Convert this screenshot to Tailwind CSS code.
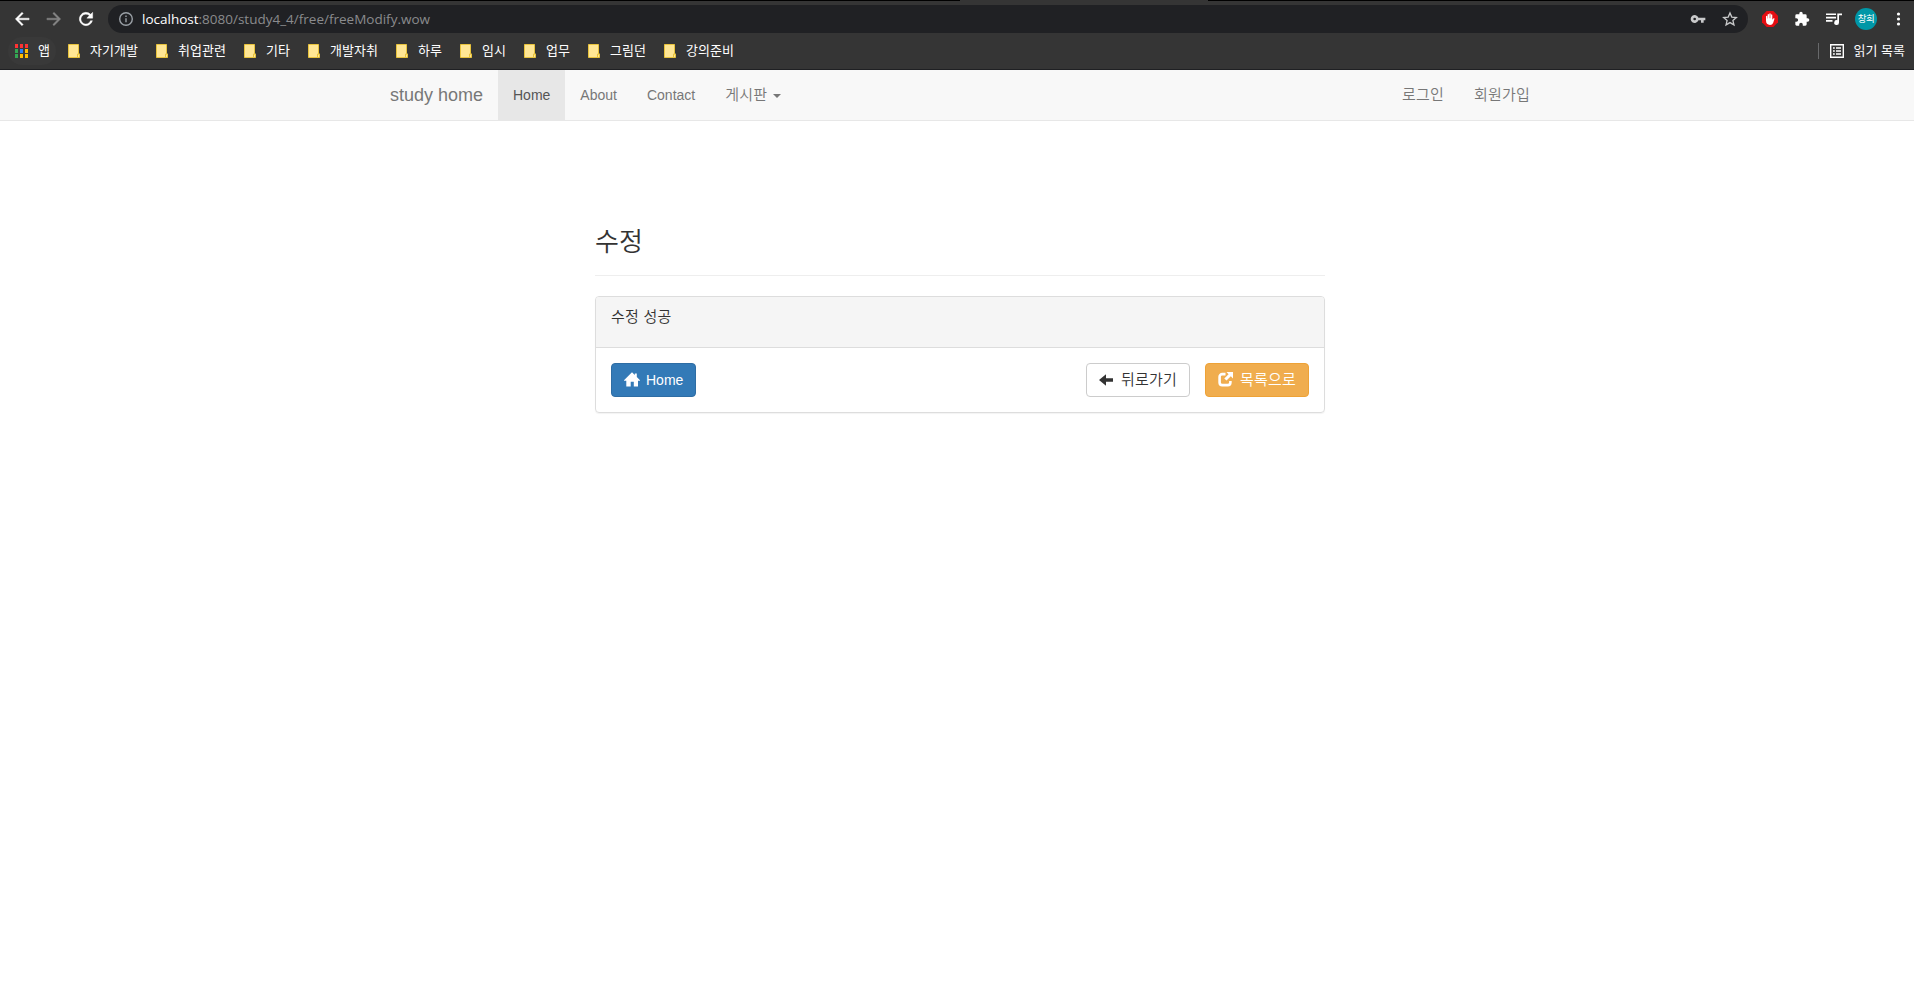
<!DOCTYPE html>
<html lang="ko">
<head>
  <meta charset="UTF-8" />
  <meta name="viewport" content="width=device-width, initial-scale=1.0" />
  <title>수정</title>
  <script src="https://cdn.jsdelivr.net/npm/@tailwindcss/browser@4"></script>
</head>
<body class="h-screen overflow-hidden bg-white font-['Liberation_Sans','Noto_Sans_CJK_KR',sans-serif] text-sm text-[#333]">

  <!-- browser toolbar -->
  <header class="h-[70px] bg-[#353535] border-b border-[#1f2023]">
    <div class="flex h-px">
      <div class="w-[960px] bg-black"></div>
      <div class="w-[248px]"></div>
      <div class="grow bg-black"></div>
    </div>
    <div class="flex h-9 items-center">
      <svg class="ml-[12px] size-5" viewBox="0 0 24 24" fill="#fff" stroke="#fff" stroke-width=".5"><path d="M20.500 11H7.800l5.600-5.600L12 4l-8 8 8 8 1.400-1.400L7.800 13h12.700z"/></svg>
      <svg class="ml-[12px] size-5" viewBox="0 0 24 24" fill="#868686" stroke="#868686" stroke-width=".5"><path d="M3.500 11h12.700l-5.600-5.600L12 4l8 8-8 8-1.400-1.400 5.600-5.600H3.500z"/></svg>
      <svg class="ml-[12px] size-5" viewBox="0 0 24 24" fill="#fff" stroke="#fff" stroke-width=".5"><path d="M17.650 6.350A8 8 0 1 0 19.730 14h-2.300A5.900 5.900 0 1 1 16 7.900L13 11h7V4z"/></svg>
      <div class="ml-[12px] flex h-7 w-[1640px] items-center rounded-full bg-[#202124]">
        <svg class="ml-[10px] size-4" viewBox="0 0 16 16" fill="none" stroke="#9aa0a6" stroke-width="1.400"><circle cx="8" cy="8" r="6.300"/><path d="M8 7.200v4M8 4.500v1.500"/></svg>
        <span class="ml-2 w-[289px] whitespace-nowrap pt-[2px] font-['Open_Sans',sans-serif] text-[13.5px] text-[#8a8b8d]"><span class="text-white">localhost</span>:8080/study4_4/free/freeModify.wow</span>
        <svg class="ml-auto size-4" viewBox="0 0 24 24" fill="#c8c9ca"><path fill-rule="evenodd" d="M12.650 10A6 6 0 1 0 12.650 14H16.500v3.500h4V14H23v-4zM7 14a2 2 0 1 1 0-4 2 2 0 0 1 0 4z"/></svg>
        <svg class="ml-4 mr-[10px] size-4" viewBox="0 0 24 24" fill="none" stroke="#c8c9ca" stroke-width="2"><path d="M12 3l2.700 6.200 6.800.6-5.100 4.500 1.500 6.600L12 17.400l-5.900 3.500 1.500-6.600-5.100-4.500 6.800-.6z"/></svg>
      </div>
      <svg class="ml-[14px] size-4" viewBox="0 0 16 16"><path fill="#e40d12" d="M4.700 0h6.600L16 4.700v6.600L11.300 16H4.700L0 11.300V4.700z"/><path fill="#fff" d="M4 9.600V5.300q.7-.9 1.300 0V7.500h.3V3.500q.7-.9 1.400 0v3.700h.3V2.700q.7-.9 1.400 0v4.500H9V3.700q.7-.9 1.300 0v5l.9-1.300q.9-.6 1.400.2L11.100 12q-.7 1.900-3.100 1.900-4 0-4-4.300z"/></svg>
      <svg class="ml-4 size-4" viewBox="0 0 24 24" fill="#fff"><path d="M20.500 11H19V7a2 2 0 0 0-2-2h-4V3.500a2.500 2.500 0 0 0-5 0V5H4a2 2 0 0 0-2 2v3.800h1.500a2.700 2.700 0 0 1 0 5.400H2V20c0 1.100.9 2 2 2h3.800v-1.500a2.700 2.700 0 0 1 5.400 0V22H17a2 2 0 0 0 2-2v-4h1.500a2.500 2.500 0 0 0 0-5z"/></svg>
      <svg class="ml-4 size-4" viewBox="0 0 16 16" fill="#fff"><path d="M0 2.500h10v1.600H0zM0 5.800h10v1.600H0zM0 9.100h6.500v1.600H0zM11.300 2.500H16v1.800h-3v7.200a2.400 2.400 0 1 1-1.700-2.200z"/></svg>
      <div class="ml-[13px] flex size-[22px] items-center justify-center rounded-full bg-[#0097a7] text-[9.5px] leading-none tracking-[-0.5px] text-white">창희</div>
      <svg class="ml-[13px] size-4" viewBox="0 0 16 16" fill="#fff"><circle cx="8.500" cy="3" r="1.600"/><circle cx="8.500" cy="8" r="1.600"/><circle cx="8.500" cy="13" r="1.600"/></svg>
    </div>

    <!-- bookmarks bar -->
    <div class="flex h-7 items-center pl-2 pr-[9px] text-[13px] leading-none text-white">
      <div class="flex h-7 w-12 items-center rounded-full bg-[#393939] pl-[7px]">
        <svg class="h-[14px] w-[13px]" viewBox="0 0 13 14"><path fill="#f33" d="M0 0h3v4H0zM5 0h3v4H5zM10 0h3v4h-3z"/><path fill="#34a853" d="M0 5h3v4H0zM0 10h3v4H0z"/><path fill="#2a83f8" d="M5 5h3v4H5z"/><path fill="#fb0" d="M10 5h3v4h-3zM5 10h3v4H5zM10 10h3v4h-3z"/></svg>
        <span class="ml-[10px] pb-[2px]">앱</span>
      </div>
      <div id="bookmarks" class="ml-3 flex"></div>
      <div class="ml-auto h-4 w-px bg-[#68696b]"></div>
      <svg class="ml-[11px] size-[14px]" viewBox="0 0 14 14"><path fill="none" stroke="#fff" stroke-width="1.400" d="M.7.7h12.600v12.600H.7z"/><path fill="#fff" d="M3 3.200h1.800v1.600H3zM6 3.200h5v1.600H6zM3 6.200h1.800v1.600H3zM6 6.200h5v1.600H6zM3 9.200h1.800v1.600H3zM6 9.200h5v1.600H6z"/></svg>
      <span class="ml-[10px] whitespace-nowrap pb-[2px]">읽기 목록</span>
    </div>
  </header>

  <!-- navbar -->
  <nav class="h-[51px] border-b border-[#e7e7e7] bg-[#f8f8f8] text-[#777]">
    <div class="ml-[375px] flex h-[50px] w-[1170px] items-center">
      <a class="w-[123px] pl-[15px] text-lg">study home</a>
      <a class="flex h-full items-center bg-[#e7e7e7] px-[15px] text-[#555]">Home</a>
      <a class="px-[15px]">About</a>
      <a class="px-[15px]">Contact</a>
      <a class="flex items-center px-[15px] pb-[2px] font-['Noto_Sans_CJK_KR',sans-serif] text-[15px] leading-5 font-[350] tracking-[0.2px]">게시판
        <span class="ml-[6px] mt-1 border-x-4 border-t-4 border-x-transparent border-t-[#777]"></span>
      </a>
      <a class="ml-auto px-[15px] pb-[2px] font-['Noto_Sans_CJK_KR',sans-serif] text-[15px] leading-5 font-[350] tracking-[0.2px]">로그인</a>
      <a class="px-[15px] pb-[2px] font-['Noto_Sans_CJK_KR',sans-serif] text-[15px] leading-5 font-[350] tracking-[0.2px]">회원가입</a>
    </div>
  </nav>

  <main class="ml-[595px] w-[730px] pt-[102px] font-['Noto_Sans_CJK_KR',sans-serif] font-[350]">
    <h3 class="h-[53px] border-b border-[#eee] pt-px text-[26px] leading-[32px] font-[350]">수정</h3>
    <div class="mt-5 h-[117px] rounded border border-[#ddd] shadow-[0_1px_1px_rgba(0,0,0,0.05)]">
      <div class="h-[51px] rounded-t-[3px] border-b border-[#ddd] bg-[#f5f5f5] px-[15px] pt-[9px] text-[15px] leading-5 tracking-[0.2px]">수정 성공</div>
      <div class="flex p-[15px]">
        <button class="flex h-[34px] w-[85px] items-center rounded border border-[#2e6da4] bg-[#337ab7] pl-3 font-['Liberation_Sans',sans-serif] text-white">
          <svg class="size-4" viewBox="0 0 16 16" fill="#fff"><path d="M8 .3l2.800 2.700V1.500h2v3.500L16 8.200v.5h-2V14.500H9.800v-4.800H6.700v4.800H2.300V8.700H0v-.5z"/></svg>
          <span class="ml-[6px]">Home</span>
        </button>
        <button class="ml-auto flex h-[34px] w-[104px] items-center rounded border border-[#ccc] bg-white pl-3 text-[15px]">
          <svg class="size-[14px]" viewBox="0 0 14 14" fill="#333"><path d="M0 7L7 1.300V5.300h7v3.400H7v4z"/></svg>
          <span class="ml-2 whitespace-nowrap pb-[2px] leading-5 tracking-[0.2px]">뒤로가기</span>
        </button>
        <button class="ml-[15px] flex h-[34px] w-[104px] items-center rounded border border-[#eea236] bg-[#f0ad4e] pl-3 text-[15px] text-white">
          <svg class="mb-[2px] size-[15px]" viewBox="0 0 15 15"><path fill="none" stroke="#fff" stroke-width="2.600" d="M7.500 2.100H4.300a2.700 2.700 0 0 0-2.700 2.700v5.600a2.700 2.700 0 0 0 2.700 2.700h5.400a2.700 2.700 0 0 0 2.700-2.700V9"/><path fill="#fff" d="M8.500 0H15v6.500l-2.200-2.200-4.300 4.300-2.200-2.200 4.300-4.200z"/></svg>
          <span class="ml-[7px] whitespace-nowrap pb-[2px] leading-5 tracking-[0.2px]">목록으로</span>
        </button>
      </div>
    </div>
  </main>

  <script>
    const names = ["자기개발", "취업관련", "기타", "개발자취", "하루", "임시", "업무", "그림던", "강의준비"];
    document.getElementById("bookmarks").innerHTML = names.map(name => `
      <div class="flex items-center" style="width: ${name.length * 12 + 40}px">
        <svg class="h-[14px] w-3" viewBox="0 0 12 14"><path fill="#ffe694" stroke="#e8c33c" d="M.5.5h10V10h1v3.500H.5z"/><path fill="none" stroke="#e8c33c" d="M9.500 13.500V10h2"/></svg>
        <span class="ml-[10px] whitespace-nowrap pb-[2px]">${name}</span>
      </div>`).join("");
  </script>
</body>
</html>
